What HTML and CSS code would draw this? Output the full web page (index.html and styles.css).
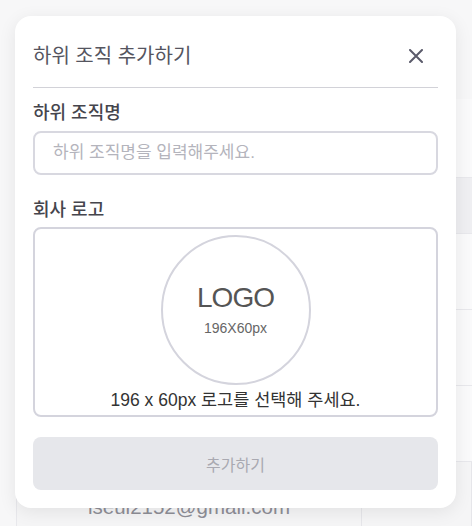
FILE: index.html
```html
<!DOCTYPE html>
<html lang="ko">
<head>
    <meta charset="UTF-8">
    <meta name="viewport" content="width=device-width, initial-scale=1.0">
    <title>하위 조직 추가하기</title>
    <link rel="stylesheet" href="styles.css">
</head>
<body>
    <div class="page">
        <div class="page-top"></div>
        <div class="table">
            <div class="row row-blank"></div>
            <div class="row row-head"></div>
            <div class="row"></div>
            <div class="row"></div>
            <div class="row"></div>
            <div class="row row-email">
                <div class="cell">lseul2152@gmail.com</div>
                <div class="cell"></div>
            </div>
        </div>
    </div>

    <div class="modal">
        <div class="modal-header">
            <h2 class="modal-title">하위 조직 추가하기</h2>
            <button class="close-btn" type="button" aria-label="닫기">
                <svg width="14" height="14" viewBox="0 0 14 14">
                    <path d="M1 1L13 13M13 1L1 13" stroke="#5b5b6b" stroke-width="2" stroke-linecap="round"/>
                </svg>
            </button>
        </div>

        <form class="modal-body">
            <label class="field-label" for="orgName">하위 조직명</label>
            <input class="text-input" type="text" id="orgName" placeholder="하위 조직명을 입력해주세요.">

            <div class="field-label">회사 로고</div>
            <div class="logo-box">
                <div class="logo-circle">
                    <span class="logo-word">LOGO</span>
                    <span class="logo-size">196X60px</span>
                </div>
                <p class="logo-hint">196 x 60px 로고를 선택해 주세요.</p>
            </div>

            <button class="submit-btn" type="submit" disabled>추가하기</button>
        </form>
    </div>
</body>
</html>
```

FILE: styles.css
```css
* { box-sizing: border-box; }
body { margin: 0; background: #f7f7f8; font-family: "Liberation Sans", "Noto Sans CJK KR", sans-serif; overflow: hidden; }

/* background page, seen behind the modal */
.page { height: 526px; }
.page-top { height: 99px; }
.table { margin-left: 16px; border-left: 1px solid #e8e8ec; background: #fafafb; }
.row { height: 76px; border-bottom: 1px solid #e8e8ec; }
.row-blank { height: 79px; }
.row-head { height: 56px; background: #efeff2; }
.row-email { display: grid; grid-template-columns: 345px 1fr; height: 90px; background: #f5f5f6; }
.row-email .cell { border-right: 1px solid #e6e6ea; padding-top: 33px; text-align: center; font-size: 20.5px; color: #8e8e96; }

/* modal */
.modal { position: absolute; left: 15px; top: 16px; width: 441px; padding: 0 18px 18px; background: #fff; border-radius: 16px; box-shadow: 0 4px 18px rgba(0, 0, 0, 0.08); }
.modal-header { display: flex; align-items: center; justify-content: space-between; padding: 28px 15px 19px 0; border-bottom: 1px solid #d2d2d8; }
.modal-title { margin: 0; font-size: 20px; line-height: 24px; font-weight: 400; color: #55555f; }
.close-btn { display: flex; padding: 0; border: none; background: none; cursor: pointer; }

.modal-body { display: flex; flex-direction: column; }
.field-label { margin-top: 13px; margin-bottom: 6px; font-size: 18px; line-height: 24px; font-weight: 500; color: #45454d; }
.text-input { height: 44px; padding: 0 18px; border: 2px solid #d8d8e0; border-radius: 8px; font-family: inherit; font-size: 17px; color: #333; }
.text-input::placeholder { color: #b4b4bc; }
.text-input + .field-label { margin-top: 23px; margin-bottom: 5px; }

.logo-box { display: flex; flex-direction: column; align-items: center; height: 190px; padding-top: 6px; border: 2px solid #d4d4dd; border-radius: 8px; }
.logo-circle { display: flex; flex-direction: column; align-items: center; width: 150px; height: 150px; padding-top: 45px; border: 2px solid #d4d4dd; border-radius: 50%; }
.logo-word { font-size: 28px; line-height: 32px; letter-spacing: -1px; color: #555; }
.logo-size { margin-top: 5px; font-size: 14px; line-height: 18px; color: #666; }
.logo-hint { margin: 4px 0 0; font-size: 17.5px; line-height: 22px; color: #333; }

.submit-btn { height: 53px; margin-top: 20px; border: none; border-radius: 8px; background: #e6e7eb; font-family: inherit; font-size: 16px; color: #a9a9b1; }
```
